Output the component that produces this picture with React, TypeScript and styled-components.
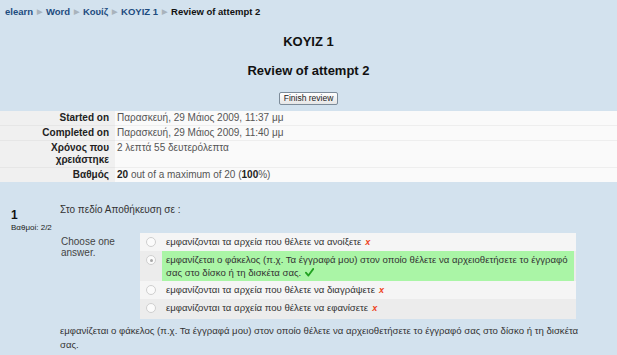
import React from "react";
import styled, { createGlobalStyle } from "styled-components";

const GlobalStyle = createGlobalStyle`
  html, body {
    margin: 0;
    padding: 0;
    background: #d3e2ee;
    font-family: "Liberation Sans", Arial, sans-serif;
    color: #333;
  }
`;

const Page = styled.div`
  width: 617px;
  min-height: 355px;
  background: #d3e2ee;
`;

const Breadcrumb = styled.div`
  display: flex;
  align-items: center;
  gap: 4px;
  padding: 6px 5px 0;
  height: 12px;
  font-size: 9.5px;
  font-weight: bold;
  line-height: 12px;
`;

const Crumb = styled.a<{ $current?: boolean }>`
  color: ${(p) => (p.$current ? "#111" : "#1d4c7f")};
  text-decoration: none;
`;

const Sep = styled.span`
  color: #a9b3bc;
  font-size: 7px;
`;

const Heading = styled.h2<{ $top: number }>`
  margin: ${(p) => p.$top}px 0 0;
  text-align: center;
  font-size: 13px;
  line-height: 16px;
  font-weight: bold;
  color: #111;
`;

const ButtonRow = styled.div`
  display: flex;
  justify-content: center;
  margin-top: 13px;
`;

const Button = styled.button`
  height: 13px;
  padding: 0 4px;
  font-family: "Liberation Sans", Arial, sans-serif;
  font-size: 8.5px;
  line-height: 11px;
  color: #222;
  background: linear-gradient(#ffffff, #e6e6e6);
  border: 1px solid #7c8b99;
  border-radius: 2px;
`;

const InfoTable = styled.div`
  margin-top: 6px;
  display: grid;
  grid-template-columns: 115px 1fr;
  font-size: 10px;
  line-height: 12px;
`;

const Label = styled.div`
  background: #f0f0f0;
  text-align: right;
  font-weight: bold;
  color: #222;
  padding: 1px 6px 1px 4px;
  border-bottom: 1px solid #e6e6e6;
  &:nth-last-child(2) {
    border-bottom: none;
  }
`;

const Value = styled.div`
  background: #fafafa;
  color: #555;
  padding: 1px 4px 1px 2px;
  border-bottom: 1px solid #eeeeee;
  &:last-child {
    border-bottom: none;
  }
  b {
    color: #222;
  }
`;

const Question = styled.div`
  display: flex;
  margin-top: 22px;
  padding-left: 11px;
`;

const QInfo = styled.div`
  width: 49px;
  flex-shrink: 0;
  padding-top: 4px;
`;

const QNum = styled.div`
  font-size: 12px;
  font-weight: bold;
  line-height: 14px;
  color: #111;
`;

const QGrade = styled.div`
  margin-top: 1px;
  font-size: 8px;
  line-height: 10px;
  color: #222;
`;

const QContent = styled.div`
  width: 530px;
  font-size: 10px;
  line-height: 12px;
  color: #333;
`;

const QText = styled.div``;

const Ablock = styled.div`
  display: flex;
  margin-top: 17px;
`;

const Prompt = styled.div`
  width: 79px;
  flex-shrink: 0;
  padding: 3px 0 0 1px;
  line-height: 11px;
  color: #444;
`;

const Answers = styled.div`
  width: 436px;
  background: #ececec;
  padding-bottom: 2px;
  font-size: 9.6px;
`;

const AnswerRow = styled.div<{ $alt?: boolean }>`
  display: flex;
  background: ${(p) => (p.$alt ? "#ececec" : "#f5f5f5")};
`;

const RadioCell = styled.div`
  width: 22px;
  flex-shrink: 0;
  display: flex;
  justify-content: center;
  padding-top: 4px;
`;

const Radio = styled.span<{ $checked?: boolean }>`
  position: relative;
  width: 8px;
  height: 8px;
  border-radius: 50%;
  border: 1px solid #cfcfcf;
  background: #fbfbfb;
  &::after {
    content: "";
    display: ${(p) => (p.$checked ? "block" : "none")};
    position: absolute;
    left: 2.5px;
    top: 2.5px;
    width: 3px;
    height: 3px;
    border-radius: 50%;
    background: #a8a8a8;
  }
`;

const AnswerText = styled.div<{ $correct?: boolean }>`
  flex: 1;
  margin-right: ${(p) => (p.$correct ? "2px" : "0")};
  padding: 2px 4px 2px 4px;
  line-height: 13px;
  color: #333;
  background: ${(p) => (p.$correct ? "#aaf5a6" : "transparent")};
`;

const Wrong = styled.span`
  margin-left: 4px;
  color: #ee4422;
  font-style: italic;
  font-weight: bold;
  font-size: 9px;
`;

const Tick = styled.svg`
  margin-left: 4px;
  width: 9px;
  height: 9px;
  vertical-align: -1px;
`;

const Feedback = styled.div`
  margin-top: 5px;
  font-size: 9.6px;
  line-height: 14px;
  color: #333;
`;

const crumbs = ["elearn", "Word", "Κουίζ", "KOYIZ 1"];

const info: [string, React.ReactNode][] = [
  ["Started on", "Παρασκευή, 29 Μάιος 2009, 11:37 μμ"],
  ["Completed on", "Παρασκευή, 29 Μάιος 2009, 11:40 μμ"],
  ["Χρόνος που χρειάστηκε", "2 λεπτά 55 δευτερόλεπτα"],
  [
    "Βαθμός",
    <>
      <b>20</b> out of a maximum of 20 (<b>100</b>%)
    </>,
  ],
];

const answers = [
  { text: "εμφανίζονται τα αρχεία που θέλετε να ανοίξετε", correct: false },
  {
    text: "εμφανίζεται ο φάκελος (π.χ. Τα έγγραφά μου) στον οποίο θέλετε να αρχειοθετήσετε το έγγραφό σας στο δίσκο ή τη δισκέτα σας.",
    correct: true,
  },
  { text: "εμφανίζονται τα αρχεία που θέλετε να διαγράψετε", correct: false },
  { text: "εμφανίζονται τα αρχεία που θέλετε να εφανίσετε", correct: false },
];

export default function App() {
  return (
    <Page>
      <GlobalStyle />
      <Breadcrumb>
        {crumbs.map((c) => (
          <React.Fragment key={c}>
            <Crumb href="#">{c}</Crumb>
            <Sep>▶</Sep>
          </React.Fragment>
        ))}
        <Crumb $current>Review of attempt 2</Crumb>
      </Breadcrumb>

      <Heading $top={16}>KOYIZ 1</Heading>
      <Heading $top={13}>Review of attempt 2</Heading>
      <ButtonRow>
        <Button>Finish review</Button>
      </ButtonRow>

      <InfoTable>
        {info.map(([label, value]) => (
          <React.Fragment key={label}>
            <Label>{label}</Label>
            <Value>{value}</Value>
          </React.Fragment>
        ))}
      </InfoTable>

      <Question>
        <QInfo>
          <QNum>1</QNum>
          <QGrade>Βαθμοί: 2/2</QGrade>
        </QInfo>
        <QContent>
          <QText>Στο πεδίο Αποθήκευση σε :</QText>
          <Ablock>
            <Prompt>
              Choose one
              <br />
              answer.
            </Prompt>
            <Answers>
              {answers.map((a, i) => (
                <AnswerRow key={i} $alt={i % 2 === 1}>
                  <RadioCell>
                    <Radio $checked={a.correct} />
                  </RadioCell>
                  <AnswerText $correct={a.correct}>
                    {a.text}
                    {a.correct ? (
                      <Tick viewBox="0 0 10 10">
                        <path
                          d="M1 5.2 L3.8 8.4 L9.2 1"
                          fill="none"
                          stroke="#21a121"
                          strokeWidth="2"
                          strokeLinecap="round"
                          strokeLinejoin="round"
                        />
                      </Tick>
                    ) : (
                      <Wrong>x</Wrong>
                    )}
                  </AnswerText>
                </AnswerRow>
              ))}
            </Answers>
          </Ablock>
          <Feedback>
            εμφανίζεται ο φάκελος (π.χ. Τα έγγραφά μου) στον οποίο θέλετε να
            αρχειοθετήσετε το έγγραφό σας στο δίσκο ή τη δισκέτα σας.
          </Feedback>
        </QContent>
      </Question>
    </Page>
  );
}
